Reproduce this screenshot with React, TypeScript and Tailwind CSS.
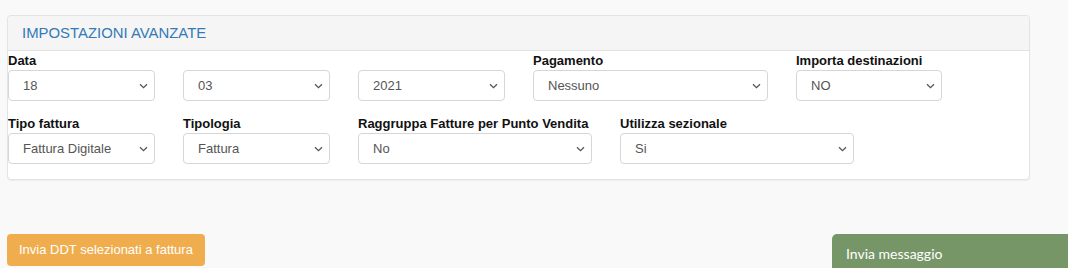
import React from "react";

function Chevron() {
  return (
    <svg width="9" height="6" viewBox="0 0 9 6" className="shrink-0">
      <path d="M1 1.2 L4.5 4.6 L8 1.2" fill="none" stroke="#555" strokeWidth="1.3" />
    </svg>
  );
}

function Field({ label, value, w }: { label: string; value: string; w: string }) {
  return (
    <div className={`flex flex-col ${w}`}>
      <div className="h-[16px] leading-[16px] text-[13px] font-bold text-[#111] mb-px whitespace-nowrap">{label}</div>
      <div className="h-[31px] border border-[#d6d6d6] rounded-[4px] bg-white flex items-center pl-[14px] pr-[6px]">
        <span className="flex-1 text-[13px] text-[#555]">{value}</span>
        <Chevron />
      </div>
    </div>
  );
}

function NoLabelField({ value, w }: { value: string; w: string }) {
  return (
    <div className={`flex flex-col ${w}`}>
      <div className="h-[16px] mb-px" />
      <div className="h-[31px] border border-[#d6d6d6] rounded-[4px] bg-white flex items-center pl-[14px] pr-[6px]">
        <span className="flex-1 text-[13px] text-[#555]">{value}</span>
        <Chevron />
      </div>
    </div>
  );
}

export default function App() {
  return (
    <div
      className="relative min-h-[268px] bg-[#f9f9f9] overflow-hidden"
      style={{ fontFamily: '"Liberation Sans", Arial, sans-serif' }}
    >
      <div className="pt-[15px] pl-[7px]">
        <div className="w-[1023px] border border-[#e3e3e3] rounded-[4px] bg-white shadow-[0_1px_1px_rgba(0,0,0,0.05)]">
          <div className="h-[35px] bg-[#f5f5f5] border-b border-[#e3e3e3] rounded-t-[4px] pl-[14px] flex items-center">
            <span className="text-[14.9px] text-[#337ab7] pt-[1px]">IMPOSTAZIONI AVANZATE</span>
          </div>
          <div className="pt-[2px] pb-[15px]">
            <div className="flex gap-[28px]">
              <Field label="Data" value="18" w="w-[147px]" />
              <NoLabelField value="03" w="w-[147px]" />
              <NoLabelField value="2021" w="w-[147px]" />
              <Field label="Pagamento" value="Nessuno" w="w-[235px]" />
              <Field label="Importa destinazioni" value="NO" w="w-[146px]" />
            </div>
            <div className="flex gap-[28px] mt-[15px]">
              <Field label="Tipo fattura" value="Fattura Digitale" w="w-[147px]" />
              <Field label="Tipologia" value="Fattura" w="w-[147px]" />
              <Field label="Raggruppa Fatture per Punto Vendita" value="No" w="w-[234px]" />
              <Field label="Utilizza sezionale" value="Si" w="w-[234px]" />
            </div>
          </div>
        </div>
      </div>
      <div className="pl-[7px] mt-[54px]">
        <div className="w-[198px] h-[32px] bg-[#f0ad4e] rounded-[4px] flex items-center pl-[12px] text-[13px] text-white">
          Invia DDT selezionati a fattura
        </div>
      </div>
      <div
        className="fixed left-[832px] top-[234px] w-[240px] h-[40px] bg-[#779668] rounded-tl-[5px] pl-[14px] pt-[9px] text-[14px] text-white"
        style={{ fontFamily: 'Lato, sans-serif' }}
      >
        Invia messaggio
      </div>
    </div>
  );
}
